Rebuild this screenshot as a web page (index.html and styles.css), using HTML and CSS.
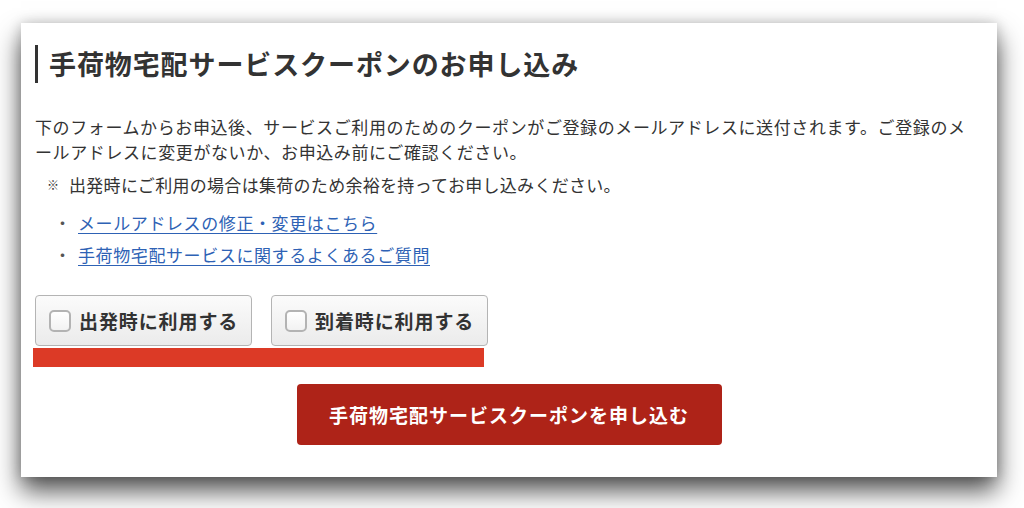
FILE: index.html
```html
<!DOCTYPE html>
<html lang="ja">
  <head>
    <meta charset="UTF-8" />
    <meta name="viewport" content="width=device-width, initial-scale=1.0" />
    <title>手荷物宅配サービスクーポンのお申し込み</title>
    <link rel="stylesheet" href="styles.css">
  </head>
  <body>
    <div class="card">
      <h1 class="title">手荷物宅配サービスクーポンのお申し込み</h1>

      <p class="lead">下のフォームからお申込後、サービスご利用のためのクーポンがご登録のメールアドレスに送付されます。ご登録のメールアドレスに変更がないか、お申込み前にご確認ください。</p>
      <p class="note"><span class="mark">※</span>出発時にご利用の場合は集荷のため余裕を持ってお申し込みください。</p>

      <ul class="links">
        <li><span class="dot">・</span><a href="#">メールアドレスの修正・変更はこちら</a></li>
        <li><span class="dot">・</span><a href="#">手荷物宅配サービスに関するよくあるご質問</a></li>
      </ul>

      <div class="choices">
        <label class="choice"><input type="checkbox" name="departure"><span class="box"></span>出発時に利用する</label>
        <label class="choice"><input type="checkbox" name="arrival"><span class="box"></span>到着時に利用する</label>
      </div>
      <div class="error-bar"></div>

      <div class="submit-row">
        <button class="submit" type="submit">手荷物宅配サービスクーポンを申し込む</button>
      </div>
    </div>
  </body>
</html>
```

FILE: styles.css
```css
html {
  background-color: #fff;
}

body {
  margin: 0;
  padding: 23px 0 31px 21px;
  color: #333;
  font-family: "Noto Sans CJK JP", "Noto Sans", sans-serif;
}

.card {
  width: 976px;
  box-sizing: border-box;
  padding: 22px 14px 32px 14px;
  background-color: #fff;
  box-shadow: 0 14px 24px rgba(0, 0, 0, 0.68), 0 0 12px rgba(0, 0, 0, 0.18);
}

.title {
  margin: 0;
  padding-left: 11px;
  border-left: 3px solid #333;
  font-size: 27px;
  line-height: 38px;
  font-weight: bold;
  letter-spacing: 0.9px;
}

.lead {
  margin: 31px 0 0;
  font-size: 17px;
  line-height: 25px;
  letter-spacing: 0.6px;
}

.note {
  margin: 8px 0 0;
  padding-left: 12px;
  display: flex;
  align-items: center;
  font-size: 17px;
  line-height: 25px;
  letter-spacing: 0.3px;
}

.mark {
  width: 22px;
  font-size: 12px;
  font-weight: bold;
}

.links {
  list-style: none;
  margin: 13px 0 0;
  padding: 0;
  font-size: 17px;
  line-height: 25px;
  letter-spacing: 0.6px;
}

.links li {
  display: flex;
  margin-bottom: 7px;
}

.links li:last-child {
  margin-bottom: 0;
}

.dot {
  width: 18px;
  margin: 0 6px 0 19px;
  color: #555;
  letter-spacing: 0;
}

.links a {
  color: #2e62b5;
  text-decoration: underline;
  text-underline-offset: 3px;
}

.choices {
  display: flex;
  gap: 19px;
  margin-top: 28px;
}

.choice {
  display: flex;
  align-items: center;
  width: 217px;
  height: 51px;
  box-sizing: border-box;
  padding-left: 13px;
  border: 1px solid #b4b4b4;
  border-radius: 4px;
  background: linear-gradient(#fbfbfb, #ebebeb);
  font-size: 19px;
  font-weight: bold;
  letter-spacing: 0.9px;
  cursor: pointer;
}

.choice input {
  display: none;
}

.box {
  width: 22px;
  height: 22px;
  box-sizing: border-box;
  margin-right: 8px;
  border: 2px solid #b3b3b3;
  border-radius: 5px;
  background: linear-gradient(#fff, #f2f2f2);
}

.error-bar {
  width: 451px;
  height: 19px;
  margin: 2px 0 0 -2px;
  background-color: #dc3a26;
}

.submit-row {
  display: flex;
  justify-content: center;
  margin-top: 17px;
}

.submit {
  width: 425px;
  height: 61px;
  border: none;
  border-radius: 4px;
  background-color: #ae2318;
  color: #fff;
  font-family: "Noto Sans CJK JP", "Noto Sans", sans-serif;
  font-size: 19px;
  font-weight: bold;
  letter-spacing: 1px;
  cursor: pointer;
}
```
